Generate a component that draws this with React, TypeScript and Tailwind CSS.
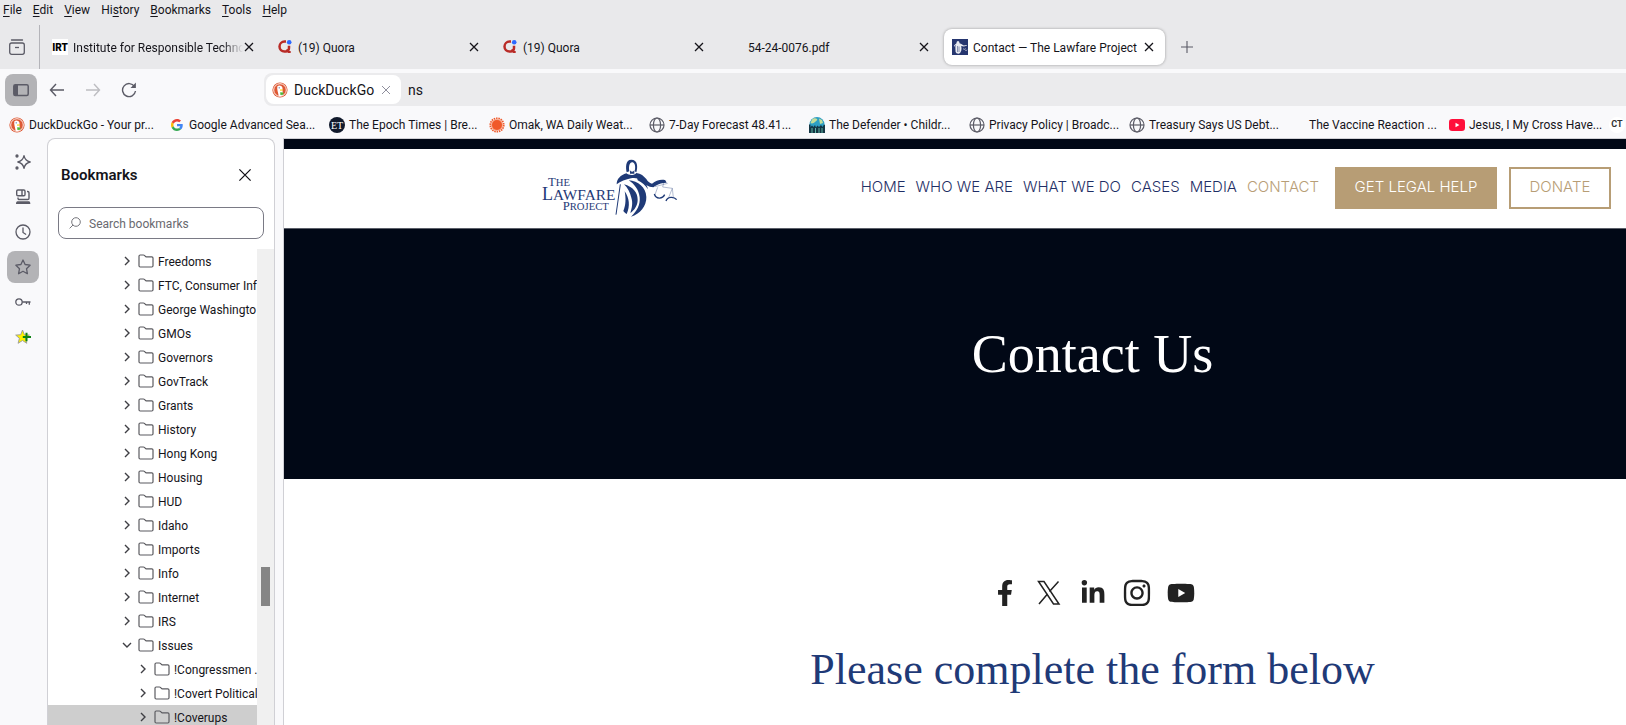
import { ReactNode, useState } from "react";
import { FaFacebookF, FaLinkedinIn, FaInstagram, FaYoutube } from "react-icons/fa";

/* ---------- Site icons ---------- */

const DuckIcon = () => (
  <svg viewBox="0 0 16 16" className="w-4 h-4">
    <circle cx="8" cy="8" r="7.6" fill="#de5833" />
    <circle cx="8" cy="8" r="6.3" fill="none" stroke="#fff" strokeWidth="0.9" />
    <path d="M5.4 4.2c1.6-1.4 4.4-.8 5 1.4.4 1.6-.2 3 .3 4.400l.6 3.200c-2 1-3.600.9-4.600.5C6.300 11 4.600 7 5.400 4.200z" fill="#fff" />
    <path d="M8 7.600c1.200-.3 2.600-.3 3.200.2-.4.9-1.900 1-3 1z" fill="#fdd20a" />
    <path d="M8.200 10.200l3.200.3-.2 2.200-2.800.4z" fill="#4cba3c" />
    <circle cx="7.200" cy="5.800" r="0.600" fill="#2d4f8e" />
  </svg>
);

const GoogleIcon = () => (
  <svg viewBox="0 0 48 48" className="w-3 h-3">
    <path fill="#EA4335" d="M24 9.500c3.540 0 6.710 1.220 9.210 3.600l6.850-6.850C35.900 2.380 30.470 0 24 0 14.620 0 6.510 5.380 2.560 13.220l7.980 6.190C12.430 13.720 17.740 9.500 24 9.500z" />
    <path fill="#4285F4" d="M46.980 24.550c0-1.570-.15-3.090-.38-4.550H24v9.020h12.940c-.58 2.960-2.260 5.480-4.780 7.180l7.730 6c4.510-4.180 7.090-10.360 7.090-17.650z" />
    <path fill="#FBBC05" d="M10.530 28.590c-.48-1.450-.76-2.990-.76-4.590s.27-3.140.76-4.590l-7.980-6.190C.92 16.460 0 20.120 0 24c0 3.880.92 7.540 2.560 10.780l7.970-6.190z" />
    <path fill="#34A853" d="M24 48c6.480 0 11.930-2.130 15.890-5.810l-7.730-6c-2.150 1.450-4.920 2.300-8.160 2.300-6.260 0-11.570-4.220-13.470-9.910l-7.980 6.190C6.510 42.620 14.620 48 24 48z" />
  </svg>
);

const QuoraIcon = () => (
  <svg viewBox="0 0 16 16" className="w-4 h-4">
    <path d="M9 2.600H7.500a4.900 4.900 0 0 0 0 10h1.200a3.400 3.400 0 0 0 3.300-3.500V6.800" fill="none" stroke="#b92b27" strokeWidth="2.500" />
    <path d="M9.500 10.500l2.200 2.600h2" fill="none" stroke="#b92b27" strokeWidth="2" />
    <circle cx="12.200" cy="3.200" r="2.300" fill="#2e69ff" />
  </svg>
);

const GlobeIcon = () => (
  <svg viewBox="0 0 16 16" className="w-4 h-4" fill="none" stroke="#5b5b66" strokeWidth="1.200">
    <circle cx="8" cy="8" r="7" />
    <ellipse cx="8" cy="8" rx="3.600" ry="7" />
    <path d="M1 8h14" />
  </svg>
);

const SunIcon = () => (
  <svg viewBox="0 0 16 16" className="w-4 h-4">
    <circle cx="8" cy="8" r="6.700" fill="none" stroke="#f0592a" strokeWidth="1.800" strokeDasharray="1.500 0.840" />
    <circle cx="8" cy="8" r="6" fill="#f6a689" />
    <circle cx="8" cy="8" r="5" fill="#f0592a" />
  </svg>
);

const EpochIcon = () => (
  <svg viewBox="0 0 16 16" className="w-4 h-4">
    <circle cx="8" cy="8" r="8" fill="#111a2c" />
    <text x="8" y="11.500" textAnchor="middle" fontSize="10" fontFamily="Liberation Serif, serif" fill="#fff">ET</text>
  </svg>
);

const DefenderIcon = () => (
  <svg viewBox="0 0 16 16" className="w-4 h-4">
    <circle cx="8" cy="7.500" r="7.500" fill="#2d9fc4" />
    <path d="M3 2.500c2-2 4-1.500 5-.5s-1 2-2 3-3 2-4.500 1zM10 1.500l3 1.500 1 3-3 1z" fill="#c5dd9a" />
    <path d="M0 7.500h1.500v2.500l1.500-1.500L4.500 10 6 8l1 2.500L8.500 8.500 10 10l2-2 1.500 2L15 7.500l1 .5v8H0z" fill="#143645" />
    <path d="M3 11v5M6.500 11v5M10 11v5M13 11v5" stroke="#5fb5a4" />
  </svg>
);

const YoutubeIcon = () => (
  <svg viewBox="0 0 16 16" className="w-4 h-4">
    <rect x="0" y="2" width="16" height="12" rx="3.200" fill="#ff0f3b" />
    <path d="M6.500 5.700v4.600L10.400 8z" fill="#fff" />
  </svg>
);

const IrtIcon = () => (
  <span className="w-4 h-4 bg-white flex items-center justify-center text-[10px] font-black text-black">IRT</span>
);

const CtIcon = () => (
  <span className="w-4 h-4 bg-white rounded-full flex items-center justify-center text-[9px] font-bold text-[#333]">CT</span>
);

const LawfareIcon = () => (
  <svg viewBox="0 0 16 16" className="w-4 h-4">
    <rect width="16" height="16" fill="#26366f" />
    <path d="M4.500 4.200c0-3 3-3 3 0l1.800.8 2.500 1.500 3-.5v.8l-3 .7-2.600-.6c.8 3 .2 6.500-2.200 7.800-2 .2-3-.8-3.500-2L3 8 2 6.500z" fill="#fff" opacity="0.900" />
    <path d="M5.500 7v6M7 7.500v5.500M3.500 6l-1 9" stroke="#26366f" strokeWidth="0.500" />
    <path d="M11 9.500c1 1.200 2 1 2.500 0M13 10.800c.7.900 1.500.8 2.200 0" stroke="#fff" strokeWidth="0.600" fill="none" />
  </svg>
);

/* ---------- Browser icons ---------- */

const CloseIcon = ({ className }: { className: string }) => (
  <svg viewBox="0 0 10 10" className={className} fill="none" stroke="currentColor">
    <path d="M1 1l8 8M9 1l-8 8" />
  </svg>
);

const FolderIcon = () => (
  <svg viewBox="0 0 16 14" className="w-4 h-3.5 shrink-0" fill="none" stroke="#5b5b60" strokeWidth="1.200">
    <path d="M1 11.800V2.200C1 1.500 1.500 1 2.200 1h3.200c.4 0 .7.100 1 .4l1 1c.2.300.500.400.900.400h5.500c.700 0 1.200.500 1.200 1.200v7.800c0 .7-.5 1.200-1.200 1.200H2.200C1.500 13 1 12.500 1 11.800z" />
  </svg>
);

const Chevron = ({ open }: { open?: boolean }) => (
  <svg viewBox="0 0 10 10" className="w-2.5 h-2.5 shrink-0" fill="none" stroke="#3f3f44" strokeWidth="1.400">
    {open ? <path d="M1 3l4 4 4-4" /> : <path d="M3 1l4 4-4 4" />}
  </svg>
);

const railIcons: { label: string; icon: ReactNode }[] = [
  {
    label: "AI chatbot",
    icon: (
      <svg viewBox="0 0 16 16" className="w-4 h-4" fill="none" stroke="#5b5b66" strokeWidth="1.300" strokeLinejoin="round">
        <path d="M9 1.700c.7 3.700 2.200 5.400 6.200 6.300-4 .9-5.500 2.600-6.200 6.300-.7-3.700-2.200-5.400-6.200-6.300 4-.9 5.500-2.600 6.200-6.300z" />
        <circle cx="2" cy="2" r="1" fill="#5b5b66" />
        <circle cx="2" cy="14" r="1" fill="#5b5b66" />
      </svg>
    ),
  },
  {
    label: "Tabs from other devices",
    icon: (
      <svg viewBox="0 0 16 16" className="w-4 h-4" fill="none" stroke="#5b5b66" strokeWidth="1.400">
        <rect x="1.700" y="1" width="8.300" height="5.800" rx="1.200" />
        <path d="M7 1v6" />
        <path d="M12 2.500h.7c.8 0 1.300.5 1.300 1.300v5.400c0 .8-.5 1.300-1.300 1.300H4.300c-.8 0-1.300-.5-1.300-1.300V8.500" />
        <path d="M2.500 12.200h11.500c.8 0 1.300 1 1.300 2.800H1c0-1.800.5-2.800 1.500-2.800z" fill="#5b5b66" stroke="none" />
      </svg>
    ),
  },
  {
    label: "History",
    icon: (
      <svg viewBox="0 0 16 16" className="w-4 h-4" fill="none" stroke="#5b5b66" strokeWidth="1.300" strokeLinecap="round">
        <circle cx="8" cy="8" r="7" />
        <path d="M8 4v4.500l2.700 1.700" />
      </svg>
    ),
  },
  {
    label: "Bookmarks",
    icon: (
      <svg viewBox="0 0 16 16" className="w-4 h-4" fill="none" stroke="#5b5b66" strokeWidth="1.300" strokeLinejoin="round">
        <path d="M8 1l2.100 4.500 5 .7-3.600 3.500.9 5L8 12.300l-4.400 2.400.9-5L.9 6.200l5-.7z" />
      </svg>
    ),
  },
  {
    label: "Passwords",
    icon: (
      <svg viewBox="0 0 16 16" className="w-4 h-4" fill="none" stroke="#5b5b66" strokeWidth="1.300">
        <circle cx="4" cy="8" r="3.200" />
        <path d="M7.200 8H15.500M14.300 8v2.800M11.500 8v2" />
      </svg>
    ),
  },
  {
    label: "Add bookmark",
    icon: (
      <svg viewBox="0 0 16 16" className="w-4 h-4">
        <path d="M7.500 1l1.900 4.700 5 .4-3.900 3.200 1.300 5-4.300-2.800-4.400 2.800 1.300-5L.7 6.100l5-.4z" fill="#fff200" stroke="#9a9a9a" strokeWidth="0.900" />
        <path d="M11.500 3.800v8.400M7.800 8H16" stroke="#0d8313" strokeWidth="2" />
      </svg>
    ),
  },
];

/* ---------- Data ---------- */

const menus = [
  ["", "F", "ile"],
  ["", "E", "dit"],
  ["", "V", "iew"],
  ["Hi", "s", "tory"],
  ["", "B", "ookmarks"],
  ["", "T", "ools"],
  ["", "H", "elp"],
];

const tabs: { title: string; icon: ReactNode }[] = [
  { title: "Institute for Responsible Techno", icon: <IrtIcon /> },
  { title: "(19) Quora", icon: <QuoraIcon /> },
  { title: "(19) Quora", icon: <QuoraIcon /> },
  { title: "54-24-0076.pdf", icon: null },
  { title: "Contact — The Lawfare Project", icon: <LawfareIcon /> },
];

const toolbarBookmarks: { title: string; icon: ReactNode }[] = [
  { title: "DuckDuckGo - Your pr...", icon: <DuckIcon /> },
  { title: "Google Advanced Sea...", icon: <GoogleIcon /> },
  { title: "The Epoch Times | Bre...", icon: <EpochIcon /> },
  { title: "Omak, WA Daily Weat...", icon: <SunIcon /> },
  { title: "7-Day Forecast 48.41...", icon: <GlobeIcon /> },
  { title: "The Defender • Childr...", icon: <DefenderIcon /> },
  { title: "Privacy Policy | Broadc...", icon: <GlobeIcon /> },
  { title: "Treasury Says US Debt...", icon: <GlobeIcon /> },
  { title: "The Vaccine Reaction ...", icon: null },
  { title: "Jesus, I My Cross Have...", icon: <YoutubeIcon /> },
];

const folders: { name: string; open?: boolean; child?: boolean }[] = [
  { name: "Freedoms" },
  { name: "FTC, Consumer Inf." },
  { name: "George Washingto" },
  { name: "GMOs" },
  { name: "Governors" },
  { name: "GovTrack" },
  { name: "Grants" },
  { name: "History" },
  { name: "Hong Kong" },
  { name: "Housing" },
  { name: "HUD" },
  { name: "Idaho" },
  { name: "Imports" },
  { name: "Info" },
  { name: "Internet" },
  { name: "IRS" },
  { name: "Issues", open: true },
  { name: "!Congressmen .", child: true },
  { name: "!Covert Political", child: true },
  { name: "!Coverups", child: true },
];

const navLinks = ["HOME", "WHO WE ARE", "WHAT WE DO", "CASES", "MEDIA", "CONTACT"];

/* ---------- Browser chrome ---------- */

function TabStrip() {
  const [active, setActive] = useState(4);

  return (
    <div className="h-11 flex items-center bg-[#e9e9eb] shrink-0">
      <button aria-label="Recent browsing" className="w-[39px] pl-[9px] shrink-0">
        <svg viewBox="0 0 16 16" className="w-4 h-4" fill="none" stroke="#5b5b66" strokeWidth="1.300">
          <path d="M2.500 1h11" strokeLinecap="round" />
          <rect x="0.700" y="4" width="14.600" height="11.300" rx="2" />
          <path d="M6 8.500h4" />
        </svg>
      </button>
      <div className="w-px h-11 bg-[#b4b4b9] mr-1 shrink-0" />
      <div className="flex gap-1">
        {tabs.map((tab, index) => (
          <div
            key={index}
            className={`w-[221px] h-9 pl-2 pr-2.5 rounded-lg flex items-center ${
              index === active ? "bg-white shadow-[0_0_3px_rgba(0,0,0,0.35)]" : ""
            }`}
          >
            <button onClick={() => setActive(index)} className="flex-1 min-w-0 flex items-center gap-[5px] text-left">
              <span className="w-4 h-4 shrink-0">{tab.icon}</span>
              <span
                className={`flex-1 pt-0.5 overflow-hidden whitespace-nowrap ${
                  index === 0 ? "[mask-image:linear-gradient(to_left,transparent,black_20px)]" : ""
                }`}
              >
                {tab.title}
              </span>
            </button>
            <button aria-label="Close tab" className="w-3 shrink-0 flex justify-center text-[#15141a]">
              <CloseIcon className="w-2.5 h-2.5 stroke-[1.3]" />
            </button>
          </div>
        ))}
      </div>
      <button aria-label="New tab" className="ml-4">
        <svg viewBox="0 0 12 12" className="w-3 h-3" stroke="#5b5b66" strokeWidth="1.100">
          <path d="M6 0v12M0 6h12" />
        </svg>
      </button>
    </div>
  );
}

function Toolbar() {
  const [address, setAddress] = useState("ns");

  return (
    <div className="h-[37px] pt-1 flex items-center shrink-0">
      <button aria-label="Toggle sidebar" className="ml-[5px] w-8 h-8 rounded-lg bg-[#b3b3b6] flex items-center justify-center">
        <svg viewBox="0 0 16 14" className="w-4 h-3.5">
          <rect x="0.800" y="1.800" width="14.400" height="10.600" rx="1.500" fill="none" stroke="#5b5b66" strokeWidth="1.500" />
          <rect x="1" y="2" width="4" height="10" fill="#5b5b66" />
        </svg>
      </button>
      <button aria-label="Back" className="ml-1 w-8 h-8 flex items-center justify-center">
        <svg viewBox="0 0 16 14" className="w-4 h-3.5" fill="none" stroke="#5b5b66" strokeWidth="1.400">
          <path d="M15 7H1.500M7 1L1.500 7 7 13" />
        </svg>
      </button>
      <button aria-label="Forward" className="ml-1 w-8 h-8 flex items-center justify-center">
        <svg viewBox="0 0 16 14" className="w-4 h-3.5" fill="none" stroke="#bdbdc1" strokeWidth="1.400">
          <path d="M1 7h13.500M9 1l5.500 6L9 13" />
        </svg>
      </button>
      <button aria-label="Reload" className="ml-1 w-8 h-8 flex items-center justify-center">
        <svg viewBox="0 0 16 16" className="w-4 h-4" fill="none" stroke="#5b5b66" strokeWidth="1.400">
          <path d="M13.500 4.500A6.500 6.500 0 1 0 14.500 9" />
          <path d="M14.900.5v5.500H9.500z" fill="#5b5b66" stroke="none" />
        </svg>
      </button>
      <div className="ml-[119px] flex-1 h-[33px] p-0.5 rounded-l-lg bg-[#ebebed] flex items-center text-[14px]">
        <div className="w-[135px] h-[29px] shrink-0 px-1.5 rounded-lg bg-white flex items-center">
          <DuckIcon />
          <span className="ml-1.5 pt-0.5 flex-1">DuckDuckGo</span>
          <button aria-label="Exit search mode" className="mr-1 text-[#8f8f9d]">
            <CloseIcon className="w-2.5 h-2.5" />
          </button>
        </div>
        <input
          type="text"
          aria-label="Address"
          value={address}
          onChange={(e) => setAddress(e.target.value)}
          className="ml-[7px] pt-0.5 flex-1 bg-transparent outline-none"
        />
      </div>
    </div>
  );
}

function BookmarksBar() {
  return (
    <div className="h-8 pl-[9px] pt-1.5 flex overflow-hidden shrink-0">
      {toolbarBookmarks.map((item) => (
        <a key={item.title} href="#" className="w-40 h-[26px] shrink-0 flex items-center gap-1 whitespace-nowrap">
          <span className="w-4 h-4 shrink-0 flex items-center justify-center">{item.icon}</span>
          {item.title}
        </a>
      ))}
      <a href="#" aria-label="CT" className="h-[26px] flex items-center shrink-0">
        <CtIcon />
      </a>
    </div>
  );
}

function Sidebar() {
  const [selected, setSelected] = useState("!Coverups");

  return (
    <>
      <nav className="w-[47px] pl-[7px] pt-2 flex flex-col gap-[3px] shrink-0">
        {railIcons.map((item) => (
          <button
            key={item.label}
            aria-label={item.label}
            className={`w-8 h-8 rounded-lg flex items-center justify-center shrink-0 ${
              item.label === "Bookmarks" ? "bg-[#b3b3b6]" : ""
            }`}
          >
            {item.icon}
          </button>
        ))}
      </nav>
      <aside className="w-[228px] mr-2 flex flex-col rounded-t-lg border border-b-0 border-[#d0d0d5] bg-white shrink-0 overflow-hidden">
        <div className="h-[68px] pt-1 pl-[13px] pr-[22px] flex items-center justify-between shrink-0">
          <h2 className="text-[15px] font-semibold">Bookmarks</h2>
          <button aria-label="Close sidebar">
            <CloseIcon className="w-[14px] h-[14px] stroke-[0.9]" />
          </button>
        </div>
        <label className="mx-2.5 h-8 px-2.5 rounded-lg border border-[#7a7a85] flex items-center gap-2 shrink-0">
          <svg viewBox="0 0 12 12" className="w-3 h-3 shrink-0" fill="none" stroke="#77777d">
            <circle cx="7" cy="5" r="4.300" />
            <path d="M4 8L.6 11.400" />
          </svg>
          <input
            type="text"
            aria-label="Search bookmarks"
            placeholder="Search bookmarks"
            className="min-w-0 pt-0.5 flex-1 outline-none placeholder:text-[#69696f]"
          />
        </label>
        <div className="mt-2.5 flex-1 min-h-0 flex">
          <ul className="flex-1 min-w-0 overflow-hidden">
            {folders.map((folder) => (
              <li key={folder.name}>
                <button
                  onClick={() => setSelected(folder.name)}
                  className={`w-full h-6 flex items-center whitespace-nowrap overflow-hidden ${
                    folder.child ? "pl-[90px]" : "pl-[74px]"
                  } ${selected === folder.name ? "bg-[#cecece]" : ""}`}
                >
                  <Chevron open={folder.open} />
                  <span className="ml-1.5 mr-1">
                    <FolderIcon />
                  </span>
                  <span className="pt-0.5">{folder.name}</span>
                </button>
              </li>
            ))}
          </ul>
          <div className="w-[17px] pt-[318px] pl-1 bg-[#f0f0f0] shrink-0">
            <div className="w-[9px] h-[39px] bg-[#858585]" />
          </div>
        </div>
      </aside>
    </>
  );
}

/* ---------- Web page ---------- */

function LawfareLogo() {
  return (
    <svg viewBox="60 55 420 180" className="w-[140px] h-[60px]" fill="#1f3a77" fontFamily="Liberation Serif, serif">
      <text x="84" y="138" fontSize="38">T<tspan fontSize="32">HE</tspan></text>
      <text x="66" y="180" fontSize="54">L<tspan fontSize="46">AWFARE</tspan></text>
      <text x="128" y="212" fontSize="38">P<tspan fontSize="32">ROJECT</tspan></text>
      {/* hood and face */}
      <path d="M320 98c-3-14-4-38 14-38 19 0 20 22 15 38l-5-3c3-12 2-24-6-27-9-2-13 12-10 27z" />
      <path d="M330 92c2 5 10 6 13 0v10h-13z" />
      {/* shoulders and outstretched arm */}
      <path d="M290 134c0-16 12-28 29-33 8 6 22 8 30-1 14 2 22 9 30 18 4 8 10 12 17 14 12-9 27-14 40-10l4 7-9 1c-12 1-22 6-31 13-15-1-27-9-36-20-9-8-21-9-31-7-15 3-32 9-43 18z" />
      {/* robe folds */}
      <path d="M326 122c28 3 52 20 53 50 1 27-19 51-46 59 18-17 28-35 26-58-3-24-16-40-33-51z" />
      <path d="M312 134c27 7 41 25 41 46 0 18-10 31-22 40 5-17 8-30 3-46-4-15-11-30-22-40z" />
      <path d="M314 155c14 20 17 44 6 68-3-1-7-5-10-9 8-18 8-38 4-59z" />
      <path d="M350 110c18 7 30 20 34 39-8-12-18-21-31-27z" />
      <path d="M301 134l-13 91" stroke="#1f3a77" strokeWidth="3" />
      {/* scales */}
      <g fill="none" stroke="#1f3a77" strokeWidth="1">
        <path d="M405 141l38-10M432 126l-4 16 29 4M413 143l-8 22M457 146l-12 30M457 146l3 28" />
        <path d="M403 163c5 16 24 16 31 2" strokeWidth="4" />
        <path d="M438 184c4-14 24-14 32-4" strokeWidth="4" />
      </g>
    </svg>
  );
}

function SiteHeader() {
  return (
    <header className="h-[79px] pl-64 pr-[15px] pb-0.5 bg-white flex items-center justify-between">
      <a href="#" aria-label="The Lawfare Project">
        <LawfareLogo />
      </a>
      <div className="flex items-center font-['Inter',sans-serif] text-[15px] font-light text-[#1f2f66] whitespace-nowrap">
        <nav className="flex gap-2.5">
          {navLinks.map((link) => (
            <a key={link} href="#" className={link === "CONTACT" ? "text-[#b89e76]" : ""}>
              {link}
            </a>
          ))}
        </nav>
        <a href="#" className="ml-4 w-[162px] h-[42px] bg-[#b79d75] text-white flex items-center justify-center">
          GET LEGAL HELP
        </a>
        <a href="#" className="ml-3 w-[102px] h-[42px] border-2 border-[#b79d75] text-[#b79d75] flex items-center justify-center">
          DONATE
        </a>
      </div>
    </header>
  );
}

const XLogo = () => (
  <svg viewBox="0 0 24 26" className="w-6 h-[26px]" fill="none" stroke="#222">
    <path d="M1.500 1.500h5.500l15 22.500h-5.500z" strokeWidth="1.500" />
    <path d="M21.500 1.500l-9 10M10.500 14L2 24" strokeWidth="1.500" />
  </svg>
);

function ContactPage() {
  const socials = [
    { name: "Facebook", icon: <FaFacebookF className="w-[26px] h-[26px]" /> },
    { name: "X", icon: <XLogo /> },
    { name: "LinkedIn", icon: <FaLinkedinIn className="w-[26px] h-[26px]" /> },
    { name: "Instagram", icon: <FaInstagram className="w-[30px] h-[30px]" /> },
    { name: "YouTube", icon: <FaYoutube className="w-7 h-7" /> },
  ];

  return (
    <main className="flex-1 min-w-0 border-l border-t border-[#d0d0d5] bg-white overflow-hidden">
      <div className="h-2.5 bg-[#010816]" />
      <SiteHeader />
      <section className="h-[251px] pl-[275px] border-t border-[#5b5f69] bg-[#010816] flex items-center justify-center">
        <h1 className="font-['Liberation_Serif',serif] text-[54px] text-white">Contact Us</h1>
      </section>
      <section className="pl-[275px] pt-[100px] flex flex-col items-center">
        <div className="flex gap-4 text-[#222]">
          {socials.map((social) => (
            <a key={social.name} href="#" aria-label={social.name} className="w-7 h-7 flex items-center justify-center">
              {social.icon}
            </a>
          ))}
        </div>
        <h2 className="mt-[30px] font-['Liberation_Serif',serif] text-[44px] text-[#1f3a77] whitespace-nowrap">
          Please complete the form below
        </h2>
      </section>
    </main>
  );
}

export default function App() {
  return (
    <div className="h-screen flex flex-col overflow-hidden bg-[#f9f9fb] font-['Roboto',sans-serif] text-[12px] text-[#15141a]">
      <div className="h-[25px] pl-[3px] bg-[#e9e9eb] flex gap-[11px] items-start shrink-0">
        {menus.map(([before, key, after]) => (
          <button key={after} className="h-5">
            {before}
            <span className="underline underline-offset-2">{key}</span>
            {after}
          </button>
        ))}
      </div>
      <TabStrip />
      <Toolbar />
      <BookmarksBar />
      <div className="flex-1 min-h-0 flex">
        <Sidebar />
        <ContactPage />
      </div>
    </div>
  );
}
